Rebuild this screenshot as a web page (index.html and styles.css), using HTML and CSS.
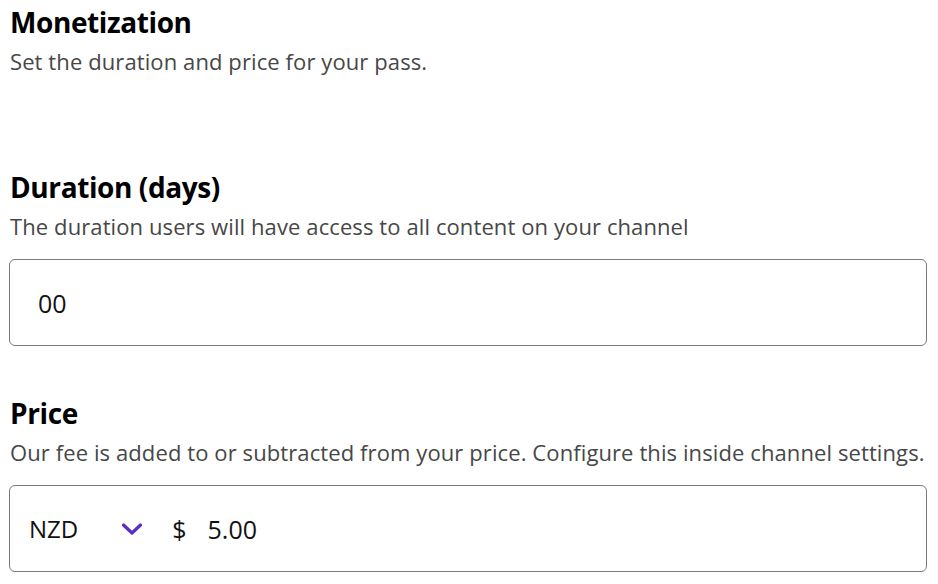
FILE: index.html
```html
<!DOCTYPE html>
<html lang="en">
<head>
    <meta charset="UTF-8" />
    <title>Monetization</title>
    <link rel="stylesheet" href="styles.css">
</head>
<body>
    <div class="section">
        <h2>Monetization</h2>
        <p class="hint">Set the duration and price for your pass.</p>
    </div>

    <div class="field">
        <label class="label" for="duration">Duration (days)</label>
        <p class="hint">The duration users will have access to all content on your channel</p>
        <div class="box">
            <input type="text" id="duration" class="box-input" value="00">
        </div>
    </div>

    <div class="field">
        <label class="label" for="price">Price</label>
        <p class="hint">Our fee is added to or subtracted from your price. Configure this inside channel settings.</p>
        <div class="box box-price">
            <div class="currency">
                <span>NZD</span>
                <svg class="chevron" width="22" height="12" viewBox="0 0 22 12">
                    <path d="M2.5 2 L11 10 L19.5 2" fill="none" stroke="#5c2fc2" stroke-width="3.2" stroke-linecap="round" stroke-linejoin="round"/>
                </svg>
            </div>
            <span class="dollar">$</span>
            <input type="text" id="price" class="box-input price-input" value="5.00">
        </div>
    </div>
</body>
</html>
```

FILE: styles.css
```css
body {
    margin: 0;
    padding: 4px 10px 0 10px;
    font-family: "Open Sans", "Noto Sans", sans-serif;
    background: #fff;
    color: #000;
}

h2, .label {
    display: block;
    margin: 0;
    font-size: 28px;
    font-weight: 700;
    line-height: 36px;
    letter-spacing: -0.4px;
}

.hint {
    margin: 7px 0 0 0;
    font-size: 22px;
    line-height: 28px;
    letter-spacing: 0.1px;
    color: #474747;
}

.section {
    margin-bottom: 94px;
}

.field {
    margin-bottom: 49px;
}

.field:last-child {
    margin-bottom: 0;
}

.box {
    box-sizing: border-box;
    margin: 19px 1px 0 -1px;
    height: 87px;
    border: 1px solid #7a7a7a;
    border-radius: 6px;
    display: flex;
    align-items: center;
    padding: 0 28px;
}

.box-price {
    padding-left: 19px;
}

.box-input {
    flex: 1;
    min-width: 0;
    border: none;
    outline: none;
    padding: 0;
    font-family: inherit;
    font-size: 25px;
    color: #111;
    background: transparent;
}

.currency {
    display: flex;
    align-items: center;
    font-size: 24px;
    color: #111;
}

.chevron {
    display: block;
    margin-left: 43px;
}

.dollar {
    margin-left: 29px;
    font-size: 25px;
    color: #111;
}

.price-input {
    margin-left: 21px;
}
```
